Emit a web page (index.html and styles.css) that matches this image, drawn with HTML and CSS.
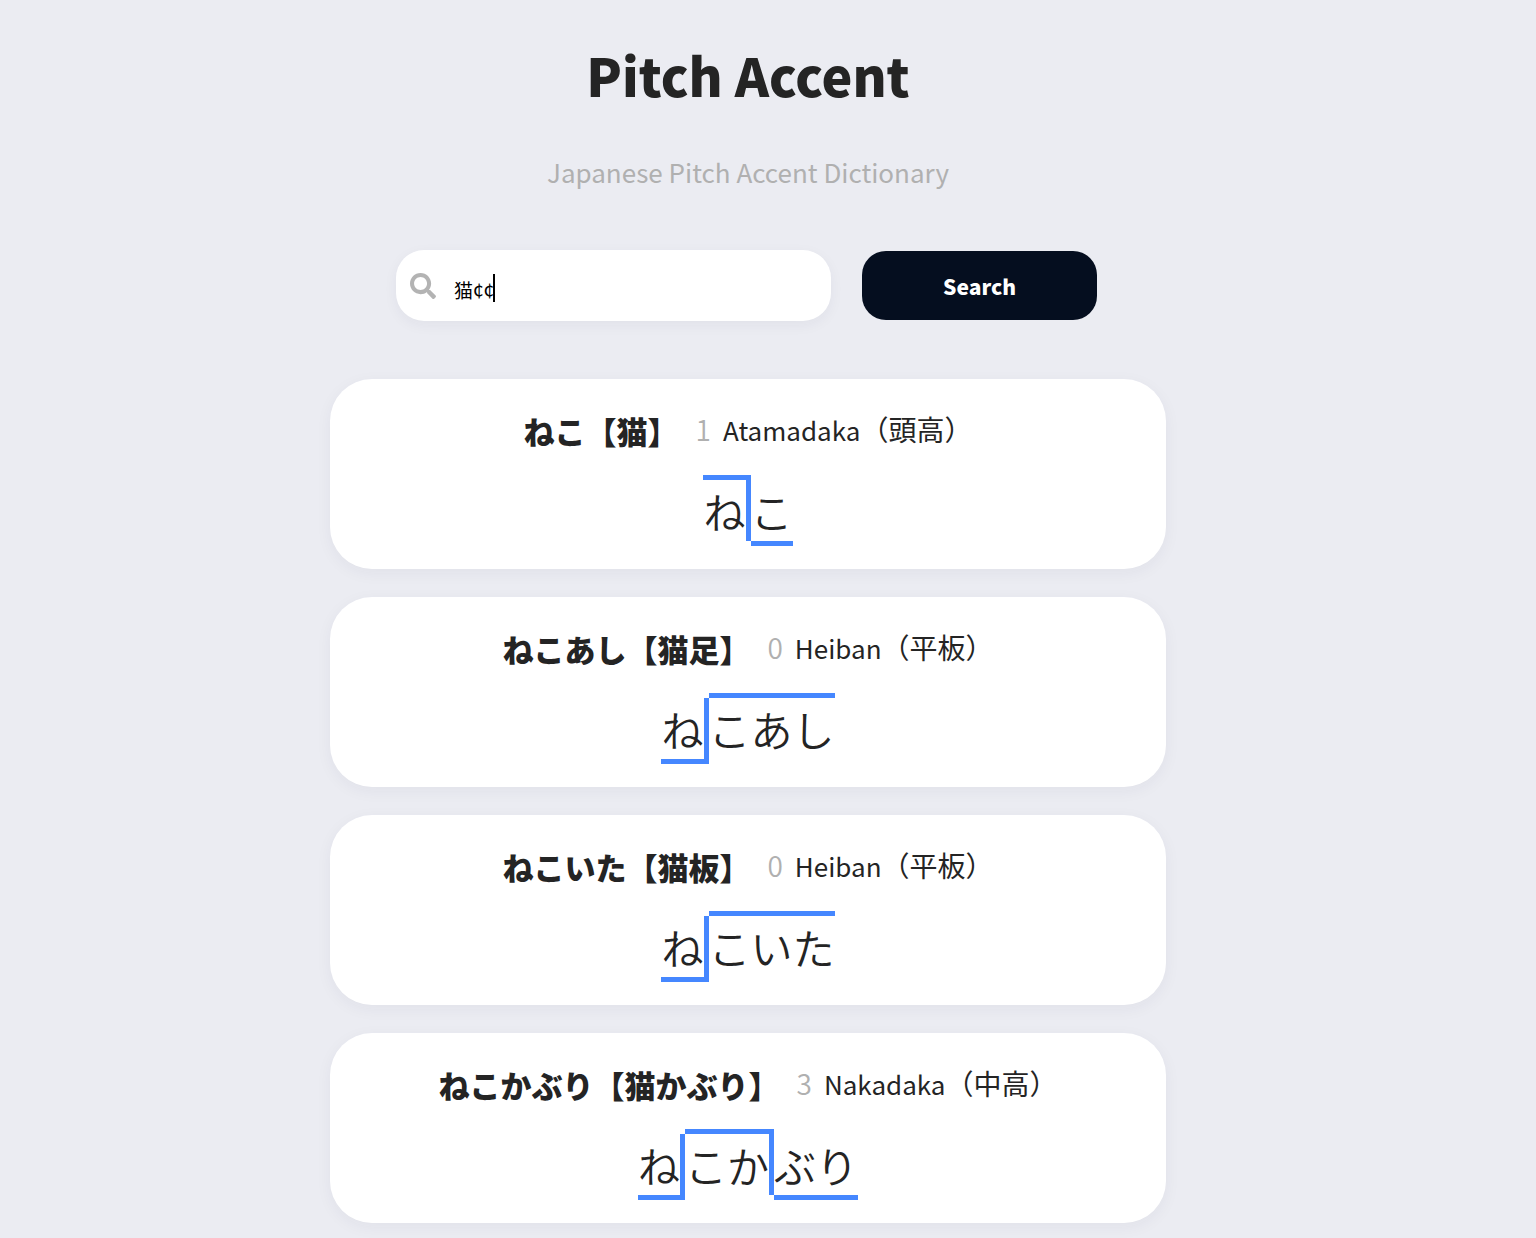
FILE: index.html
```
<!DOCTYPE html>
<html lang="ja">
<head>
<meta charset="utf-8">
<meta name="viewport" content="width=device-width, initial-scale=1">
<title>Pitch Accent</title>
<link rel="stylesheet" href="styles.css">
</head>
<body>
<main class="page">
  <header class="header">
    <h1 class="title">Pitch Accent</h1>
    <p class="subtitle">Japanese Pitch Accent Dictionary</p>
  </header>

  <form class="search" role="search">
    <label class="search-box">
      <svg class="search-icon" viewBox="0 0 512 512" aria-hidden="true"><path fill="currentColor" d="M505 442.700 405.300 343c-4.500-4.500-10.600-7-17-7H372c27.600-35.300 44-79.700 44-128C416 93.100 322.900 0 208 0S0 93.100 0 208s93.100 208 208 208c48.300 0 92.700-16.400 128-44v16.300c0 6.400 2.500 12.500 7 17l99.700 99.700c9.400 9.400 24.600 9.400 33.900 0l28.300-28.300c9.400-9.400 9.400-24.600.1-34zM208 336c-70.700 0-128-57.200-128-128 0-70.700 57.200-128 128-128 70.700 0 128 57.200 128 128 0 70.700-57.200 128-128 128z"/></svg>
      <input class="search-input" type="text" value="猫¢¢" aria-label="Search word">
      <span class="caret"></span>
    </label>
    <button class="search-button" type="submit">Search</button>
  </form>

  <section class="results">
    <article class="card">
      <div class="entry">
        <h2 class="word">ねこ【猫】</h2>
        <span class="number">1</span>
        <span class="pattern"><span class="romaji">Atamadaka</span>（頭高）</span>
      </div>
      <div class="pitch"><span class="high turn">ね</span><span class="low">こ</span></div>
    </article>
    <article class="card">
      <div class="entry">
        <h2 class="word">ねこあし【猫足】</h2>
        <span class="number">0</span>
        <span class="pattern"><span class="romaji">Heiban</span>（平板）</span>
      </div>
      <div class="pitch"><span class="low turn">ね</span><span class="high">こあし</span></div>
    </article>
    <article class="card">
      <div class="entry">
        <h2 class="word">ねこいた【猫板】</h2>
        <span class="number">0</span>
        <span class="pattern"><span class="romaji">Heiban</span>（平板）</span>
      </div>
      <div class="pitch"><span class="low turn">ね</span><span class="high">こいた</span></div>
    </article>
    <article class="card">
      <div class="entry">
        <h2 class="word">ねこかぶり【猫かぶり】</h2>
        <span class="number">3</span>
        <span class="pattern"><span class="romaji">Nakadaka</span>（中高）</span>
      </div>
      <div class="pitch"><span class="low turn">ね</span><span class="high turn">こか</span><span class="low">ぶり</span></div>
    </article>
  </section>
</main>
</body>
</html>
```
FILE: styles.css
```
* {
  box-sizing: border-box;
}

body {
  margin: 0;
  background: #ebecf2;
  color: #242424;
  font-family: "Noto Sans CJK JP", "Noto Sans", sans-serif;
}

.page {
  display: flex;
  flex-direction: column;
  align-items: center;
  padding: 35px 40px 16px 0;
}

.header {
  text-align: center;
}

.title {
  margin: 0;
  font-size: 52px;
  line-height: 80px;
  font-weight: 900;
}

.subtitle {
  margin: 37px 0 0;
  font-size: 26px;
  line-height: 40px;
  color: #b0b0b0;
}

.search {
  display: flex;
  align-items: center;
  gap: 31px;
  width: 100%;
  max-width: 704px;
  margin-top: 58px;
  padding-right: 3px;
}

.search-box {
  position: relative;
  display: flex;
  flex: 1;
  align-items: center;
  gap: 18px;
  height: 71px;
  padding: 0 14px;
  border-radius: 28px;
  background: #fff;
  box-shadow: 0 4px 14px rgba(30, 30, 80, 0.05);
}

.search-icon {
  width: 26px;
  height: 26px;
  color: #b3b3b3;
}

.search-input {
  flex: 1;
  min-width: 0;
  padding: 8px 0 0;
  border: 0;
  outline: 0;
  background: none;
  color: #000;
  font: 400 19px/28px "Noto Sans CJK JP", sans-serif;
}

.caret {
  position: absolute;
  left: 97px;
  top: 24px;
  width: 2px;
  height: 28px;
  background: #000;
}

.search-button {
  width: 235px;
  height: 69px;
  padding: 0;
  border: 0;
  border-radius: 24px;
  background: #050e1f;
  color: #fff;
  font: 900 21px/32px "Noto Sans CJK JP", sans-serif;
}

.results {
  display: flex;
  flex-direction: column;
  gap: 28px;
  width: 100%;
  max-width: 836px;
  margin-top: 58px;
}

.card {
  display: flex;
  flex-direction: column;
  align-items: center;
  padding: 30px 24px 23px;
  border-radius: 42px;
  background: #fff;
  box-shadow: 0 4px 16px rgba(30, 30, 80, 0.05);
}

.entry {
  display: flex;
  align-items: flex-start;
  height: 44px;
  white-space: nowrap;
}

.word {
  margin: 0;
  font-size: 31px;
  line-height: 44px;
  font-weight: 900;
}

.number {
  margin: 0 12px 0 17px;
  font-family: "Noto Sans CJK JP DemiLight", "Noto Sans CJK JP", sans-serif;
  font-size: 28px;
  line-height: 40px;
  font-weight: 300;
  color: #b0b0b0;
}

.pattern {
  font-size: 28px;
  line-height: 40px;
}

.romaji {
  font-size: 26px;
}

.pitch {
  display: flex;
  margin-top: 22px;
  font-family: "Noto Sans CJK JP DemiLight", "Noto Sans CJK JP", sans-serif;
  font-size: 42px;
  line-height: 61px;
  font-weight: 300;
}

.high {
  margin-bottom: 5px;
  border-top: 5px solid #4587ff;
}

.low {
  margin-top: 5px;
  border-bottom: 5px solid #4587ff;
}

.turn {
  border-right: 5px solid #4587ff;
}
```
